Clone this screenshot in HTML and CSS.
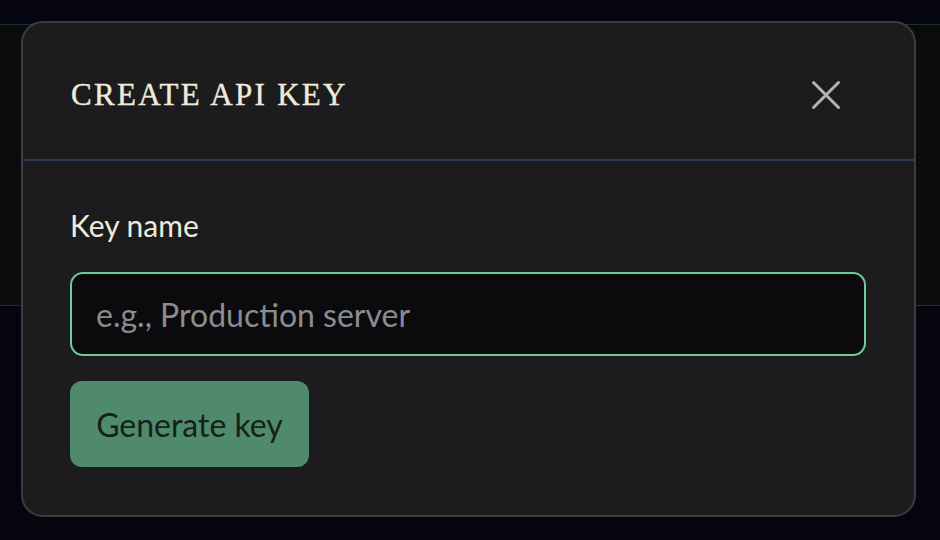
FILE: index.html
```html
<!DOCTYPE html>
<html lang="en">
<head>
    <meta charset="UTF-8">
    <meta name="viewport" content="width=device-width, initial-scale=1.0">
    <title>Create API key</title>
    <link rel="stylesheet" href="styles.css">
</head>
<body>
    <div class="page">
        <div class="backdrop-panel"></div>
    </div>

    <div class="modal">
        <div class="modal-header">
            <h2>Create API key</h2>
            <button class="close-btn" aria-label="Close">
                <svg width="30" height="30" viewBox="0 0 30 30">
                    <path d="M2.5 2.5 L27.5 27.5 M27.5 2.5 L2.5 27.5" stroke="#b4b4b8" stroke-width="3" stroke-linecap="round"/>
                </svg>
            </button>
        </div>
        <div class="modal-body">
            <label for="keyName">Key name</label>
            <input id="keyName" type="text" placeholder="e.g., Production server">
            <button class="generate-btn">Generate key</button>
        </div>
    </div>
</body>
</html>
```

FILE: styles.css
```css
* {
    box-sizing: border-box;
    margin: 0;
    padding: 0;
}

body {
    font-family: Lato, 'Open Sans', sans-serif;
    background: #05050f;
    width: 940px;
    height: 540px;
    overflow: hidden;
}

.page {
    padding-top: 24px;
}

.backdrop-panel {
    height: 282px;
    background: #0b0b0c;
    border-top: 1px solid #1f2a3c;
    border-bottom: 1px solid #2b2b2e;
}

.modal {
    position: absolute;
    left: 21px;
    top: 21px;
    width: 895px;
    height: 496px;
    background: #1c1c1e;
    border: 2px solid #3c3c40;
    border-radius: 22px;
}

.modal-header {
    height: 138px;
    display: flex;
    align-items: center;
    justify-content: space-between;
    padding: 7px 73px 0 48px;
    border-bottom: 2px solid #2c3858;
}

.modal-header h2 {
    font-family: 'Liberation Serif', 'DejaVu Serif', serif;
    font-weight: normal;
    font-size: 31px;
    letter-spacing: 2.3px;
    text-transform: uppercase;
    color: #eeecd9;
    -webkit-text-stroke: 0.4px #eeecd9;
}

.close-btn {
    background: none;
    border: none;
    width: 30px;
    height: 30px;
    display: flex;
    cursor: pointer;
}

.modal-body {
    padding: 44px 48px 0 47px;
    display: flex;
    flex-direction: column;
    align-items: flex-start;
}

label {
    font-size: 30px;
    color: #eeecdc;
    line-height: 40px;
    margin-bottom: 27px;
}

input {
    width: 796px;
    height: 84px;
    background: #0b0b0d;
    border: 2px solid #6dcb98;
    border-radius: 13px;
    padding: 0 24px;
    font-family: Lato, sans-serif;
    font-size: 32px;
    color: #eeecdc;
    outline: none;
}

input::placeholder {
    color: #8b8b90;
}

.generate-btn {
    margin-top: 25px;
    width: 239px;
    height: 86px;
    background: #4f8a6c;
    border: none;
    border-radius: 12px;
    font-family: Lato, sans-serif;
    font-size: 32px;
    color: #142219;
    cursor: pointer;
}
```
